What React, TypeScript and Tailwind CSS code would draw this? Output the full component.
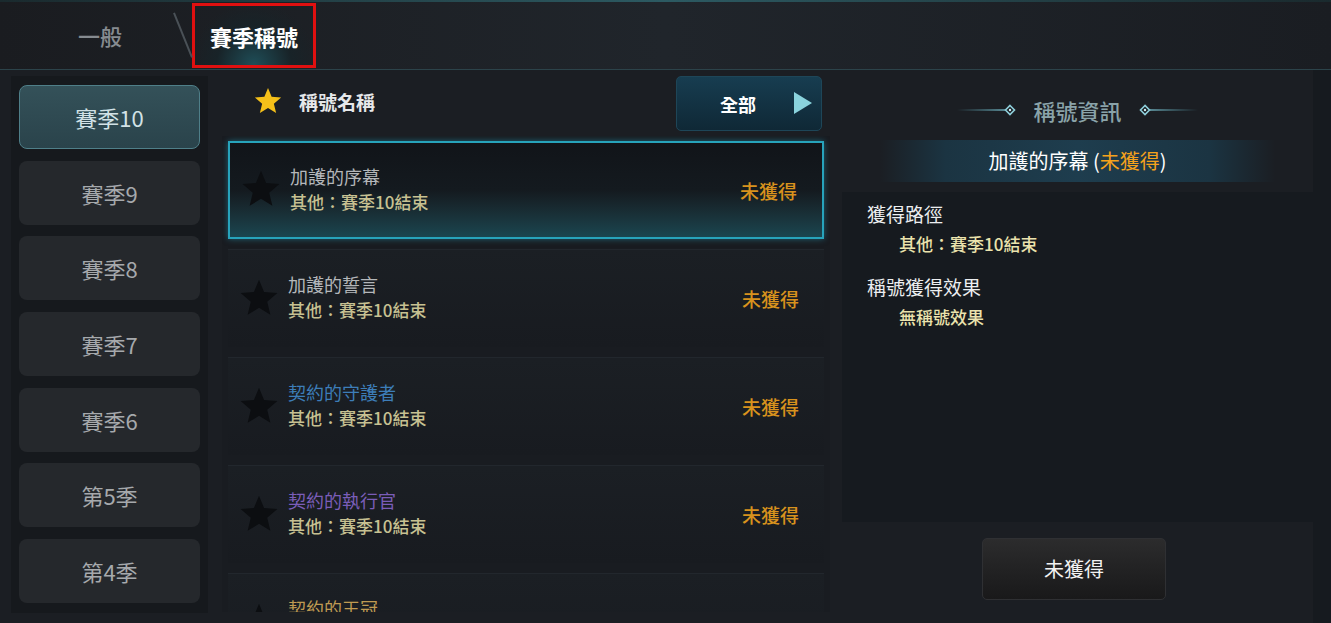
import React from "react";

const FONT = { fontFamily: '"Noto Sans CJK TC", "Noto Sans", sans-serif' };

function Star({ className, fill }: { className?: string; fill: string }) {
  return (
    <svg viewBox="0 0 24 24" className={className}>
      <polygon
        points="12,1.5 14.9,8.6 22.5,9.2 16.7,14.1 18.5,21.6 12,17.6 5.5,21.6 7.3,14.1 1.5,9.2 9.1,8.6"
        fill={fill}
      />
    </svg>
  );
}

const seasons = ["賽季10", "賽季9", "賽季8", "賽季7", "賽季6", "第5季", "第4季"];

const items = [
  { name: "加護的序幕", color: "#b4b7ba", selected: true },
  { name: "加護的誓言", color: "#b4b7ba" },
  { name: "契約的守護者", color: "#3d7db8" },
  { name: "契約的執行官", color: "#7a5db8" },
  { name: "契約的王冠", color: "#bf9a52" },
];

function Deco({ flip }: { flip?: boolean }) {
  return (
    <svg width="60" height="12" viewBox="0 0 60 12" className={flip ? "scale-x-[-1]" : ""}>
      <defs>
        <linearGradient id={flip ? "dg2" : "dg1"} x1="0" x2="1">
          <stop offset="0" stopColor="#5fb4c4" stopOpacity="0" />
          <stop offset="1" stopColor="#7cc6d4" stopOpacity="0.9" />
        </linearGradient>
      </defs>
      <rect x="0" y="5.3" width="48" height="1.4" fill={`url(#${flip ? "dg2" : "dg1"})`} />
      <polygon points="53,1.5 57.5,6 53,10.5 48.5,6" fill="none" stroke="#8fd0dc" strokeWidth="1.6" />
      <circle cx="53" cy="6" r="1.2" fill="#cfeff4" />
    </svg>
  );
}

export default function App() {
  return (
    <div
      className="w-[1331px] h-[623px] overflow-hidden flex flex-col bg-[#1b1e23]"
      style={FONT}
    >
      {/* top bar */}
      <div className="h-[70px] shrink-0 relative flex items-stretch border-b border-[#2c434a] bg-gradient-to-r from-[#1a1c20] via-[#20252b] to-[#1a1d22]">
        <div className="absolute top-0 left-0 right-0 h-[2px] bg-gradient-to-r from-[#1a2a2e] via-[#2c5a62] to-[#1a2a2e]" />
        <div className="w-[78px]" />
        <div className="flex items-center text-[22px] text-[#868b90] font-medium leading-none">一般</div>
        <div className="w-[70px] relative">
          <div className="absolute left-[51px] top-[13px] w-[1.5px] h-[48px] bg-[#4a5157] rotate-[-22deg] origin-top" />
        </div>
        <div className="mt-[3px] mb-[1px] w-[124px] border-[3px] border-[#e01010] flex items-center justify-center text-[22px] text-white font-bold leading-none bg-[radial-gradient(ellipse_at_bottom,#1f4e58_0%,#182328_45%,transparent_75%)]">
          賽季稱號
        </div>
      </div>

      <div className="flex flex-1 min-h-0">
        {/* sidebar */}
        <div className="ml-[11px] mt-[6px] mb-[10px] w-[197px] bg-[#16191d] px-[8px] pt-[9px] flex flex-col gap-[11.7px]">
          {seasons.map((s, i) =>
            i === 0 ? (
              <div
                key={s}
                className="h-[64px] shrink-0 rounded-[8px] border border-[#4f7f89] bg-gradient-to-b from-[#345159] to-[#2a434b] flex items-center justify-center text-[22px] text-[#d2e2e6] leading-none"
              >
                {s}
              </div>
            ) : (
              <div
                key={s}
                className="h-[64px] shrink-0 rounded-[8px] bg-[#25282c] flex items-center justify-center text-[22px] text-[#a6a9ac] leading-none"
              >
                {s}
              </div>
            )
          )}
        </div>

        {/* middle */}
        <div className="ml-[14px] w-[608px] flex flex-col">
          <div className="h-[66px] shrink-0 flex items-center">
            <Star className="w-[30px] h-[30px] ml-[31px] mb-[4px]" fill="#f5c019" />
            <span className="ml-[16px] mb-[4px] text-[19px] text-[#e6e8ea] font-bold leading-none">稱號名稱</span>
            <div className="ml-auto mr-[8px] mt-[2px] w-[146px] h-[55px] self-start mt-[6px] rounded-[5px] border border-[#1e4658] bg-gradient-to-b from-[#173d50] to-[#0f2836] flex items-center relative">
              <span className="ml-[43px] text-[18px] text-white font-bold leading-none">全部</span>
              <svg width="18" height="22" viewBox="0 0 18 22" className="absolute right-[9px] top-[15px]">
                <polygon points="0,0 18,11 0,22" fill="#8ad3dd" />
              </svg>
            </div>
          </div>
          <div className="flex-1 bg-[#191c21] mb-[11px] overflow-hidden flex flex-col pt-[5px]">
            {items.map((it, i) => (
              <div
                key={i}
                className={
                  it.selected
                    ? "mx-[6px] h-[98px] shrink-0 border-2 border-[#27a3bb] bg-gradient-to-b from-[#111419] via-[#141a1f] to-[#1a4650] shadow-[0_0_6px_rgba(40,170,200,0.5)] flex items-center"
                    : "mx-[6px] mt-[10px] h-[98px] shrink-0 border-t border-[#22272d] bg-gradient-to-b from-[#1b1f24] to-[#181b20] flex items-center"
                }
              >
                <Star className="w-[42px] h-[42px] ml-[10px] mb-[2px]" fill="#0c0e11" />
                <div className="ml-[8px] flex flex-col gap-[8px] mb-[4px]">
                  <span className="text-[18px] leading-none" style={{ color: it.color }}>
                    {it.name}
                  </span>
                  <span className="text-[17px] leading-none text-[#c7c192] font-medium">其他：賽季10結束</span>
                </div>
                <span className="ml-auto mr-[25px] text-[19px] leading-none text-[#d8921d] font-medium">未獲得</span>
              </div>
            ))}
          </div>
        </div>

        {/* right */}
        <div className="ml-[12px] w-[471px] flex flex-col">
          <div className="h-[70px] shrink-0 flex items-center justify-center gap-[16px] pt-[10px]">
            <Deco />
            <span className="text-[22px] text-[#8aa3a9] leading-none font-medium">稱號資訊</span>
            <Deco flip />
          </div>
          <div className="h-[42px] shrink-0 flex items-center justify-center bg-[linear-gradient(90deg,transparent_0%,transparent_8%,#1b3442_22%,#1e3d4e_50%,#1b3442_78%,transparent_92%,transparent_100%)] text-[20px] text-white leading-none">
            加護的序幕 (<span className="text-[#f5a21c]">未獲得</span>)
          </div>
          <div className="mt-[10px] h-[330px] shrink-0 bg-[#161a1f] pl-[25px] pt-[12px]">
            <div className="text-[19px] text-[#eceef0] leading-none">獲得路徑</div>
            <div className="mt-[12px] ml-[32px] text-[17px] text-[#ebe3ad] leading-none font-medium">其他：賽季10結束</div>
            <div className="mt-[25px] text-[19px] text-[#eceef0] leading-none">稱號獲得效果</div>
            <div className="mt-[12px] ml-[32px] text-[17px] text-[#ebe3ad] leading-none font-medium">無稱號效果</div>
          </div>
          <div className="flex justify-center mt-[16px]">
            <div className="ml-[-7px] w-[184px] h-[62px] rounded-[5px] bg-gradient-to-b from-[#2c2c2d] to-[#19191a] border border-[#2f3033] flex items-center justify-center text-[20px] text-[#f2f2f2] leading-none">
              未獲得
            </div>
          </div>
        </div>
        <div className="flex-1 bg-[#161a1f]" />
      </div>
    </div>
  );
}
